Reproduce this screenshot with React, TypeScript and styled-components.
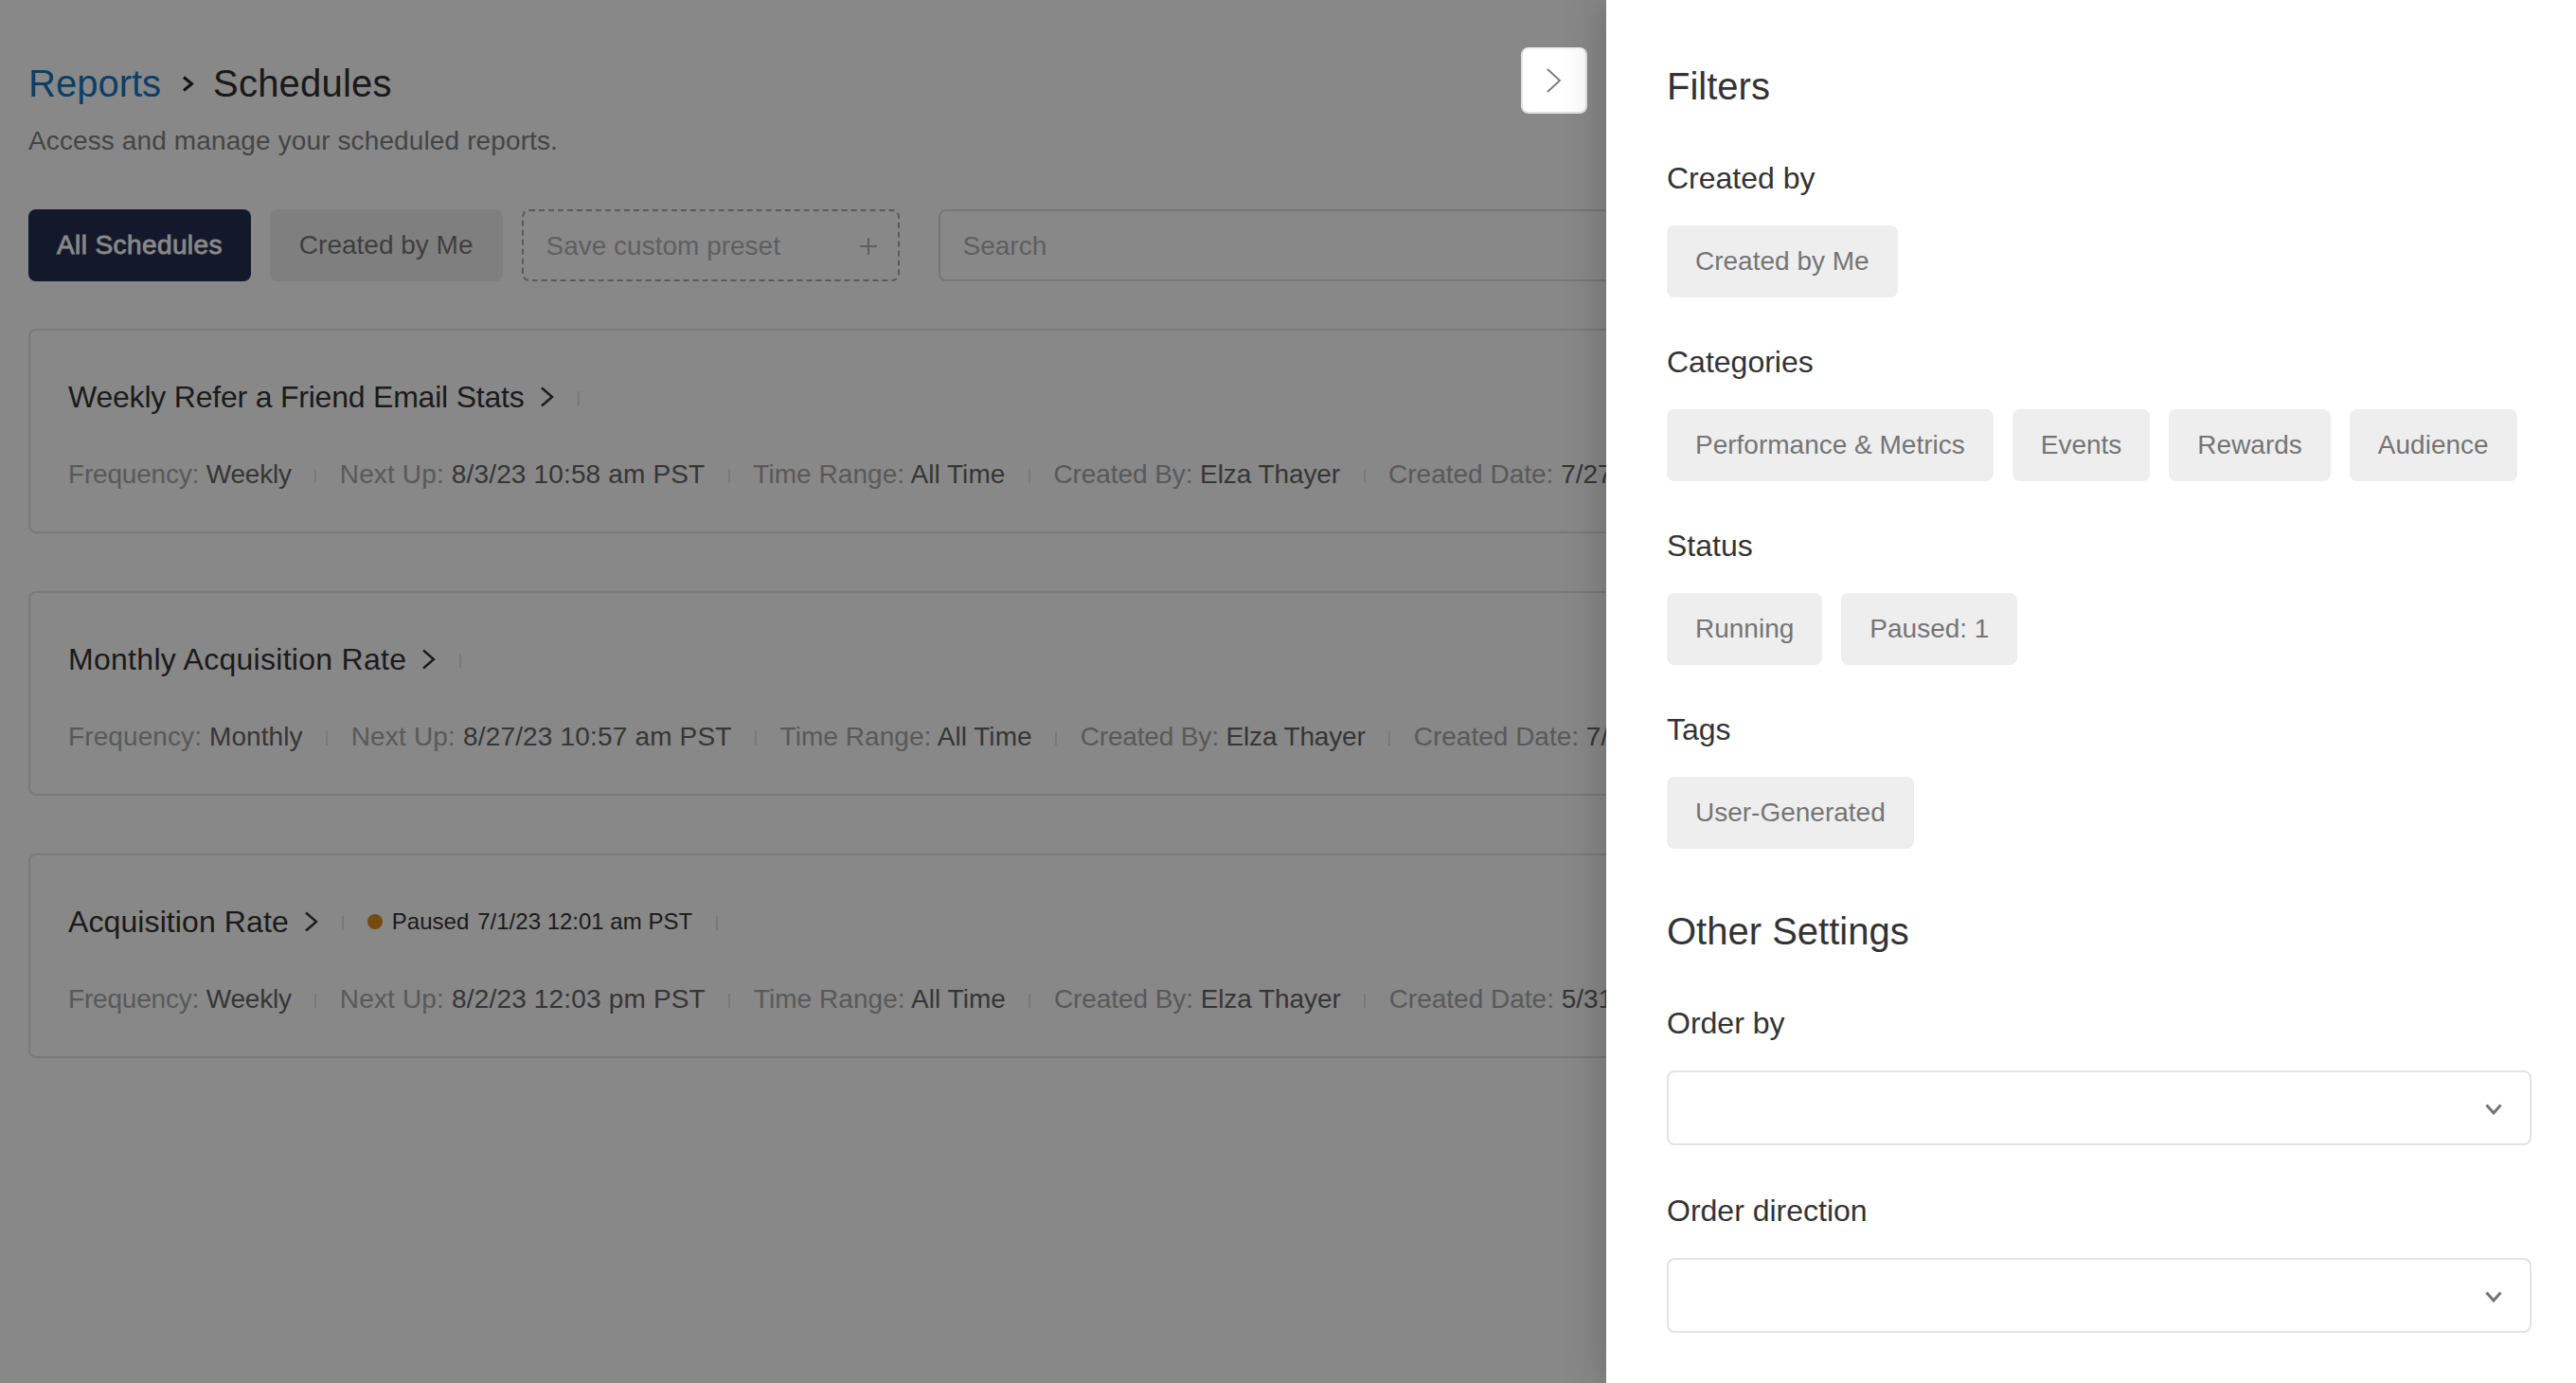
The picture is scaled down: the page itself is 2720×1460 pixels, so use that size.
import { Fragment } from "react";
import { createGlobalStyle, styled } from "styled-components";

const GlobalStyle = createGlobalStyle`
  * { box-sizing: border-box; }
  html, body { margin: 0; padding: 0; }
  body {
    background: #fff;
    font-family: "Liberation Sans", Arial, sans-serif;
    overflow: hidden;
  }
`;

const Page = styled.div`
  position: relative;
  width: 2720px;
  height: 1460px;
  overflow: hidden;
`;

const Main = styled.main`
  padding: 64px 0 0 30px;
`;

const Breadcrumb = styled.div`
  display: flex;
  align-items: center;
  height: 48px;
  font-size: 40px;
  color: #2f2f2f;
`;

const Crumb = styled.a`
  color: #1677c4;
  text-decoration: none;
`;

const CrumbArrow = styled.svg`
  width: 13px;
  height: 17px;
  margin: 0 20px 0 22px;
`;

const CurrentCrumb = styled.span`
  letter-spacing: 0.2px;
`;

const Subtitle = styled.p`
  margin: 20px 0 0;
  font-size: 28px;
  line-height: 34px;
  letter-spacing: 0.12px;
  color: #818181;
`;

const Toolbar = styled.div`
  display: flex;
  margin-top: 55px;
  gap: 20px;
`;

const PresetButton = styled.button<{ $active?: boolean }>`
  height: 76px;
  padding: 0 ${(p) => (p.$active ? "30px" : "31px")};
  border: 0;
  border-radius: 8px;
  font: inherit;
  font-size: 28px;
  background: ${(p) => (p.$active ? "#252f52" : "#eeeeee")};
  color: ${(p) => (p.$active ? "#ffffff" : "#767676")};
  letter-spacing: ${(p) => (p.$active ? "0.4px" : "0")};
  -webkit-text-stroke: ${(p) => (p.$active ? "0.8px #ffffff" : "0")};
`;

const SavePreset = styled.div`
  display: flex;
  align-items: center;
  justify-content: space-between;
  width: 399px;
  height: 76px;
  padding: 1px 22px 0 24px;
  border: 2px dashed #a9a9a9;
  border-radius: 8px;
  font-size: 28px;
  color: #b3b3b3;
`;

const PlusIcon = styled.svg`
  width: 18px;
  height: 18px;
`;

const SearchBox = styled.div`
  display: flex;
  align-items: center;
  flex: 1;
  height: 76px;
  margin-left: 21px;
  padding: 1px 24px 0;
  border: 2px solid #dddddd;
  border-radius: 8px;
  font-size: 28px;
  color: #b3b3b3;
`;

const CardList = styled.div`
  display: flex;
  flex-direction: column;
  gap: 61px;
  margin-top: 50px;
`;

const Card = styled.article`
  height: 216px;
  padding: 46px 40px 0;
  border: 2px solid #e3e3e3;
  border-radius: 8px;
  white-space: nowrap;
  overflow: hidden;
`;

const TitleRow = styled.div`
  display: flex;
  align-items: center;
  height: 48px;
`;

const CardTitle = styled.span<{ $tracking: number }>`
  font-size: 32px;
  letter-spacing: ${(p) => p.$tracking}px;
  color: #333333;
`;

const TitleChevron = styled.svg`
  width: 15px;
  height: 22px;
  margin-left: 16px;
`;

const Divider = styled.span`
  width: 2px;
  height: 15px;
  flex: none;
  background: #e3e3e3;
  margin: 2px 25px 0;
`;

const MetaDivider = styled(Divider)`
  margin: 2px 24.5px 0;
`;

const StatusDot = styled.span`
  width: 16px;
  height: 16px;
  border-radius: 50%;
  background: #dd8b1f;
  margin-right: 10px;
`;

const StatusText = styled.span`
  font-size: 24px;
  color: #333333;
`;

const StatusDate = styled(StatusText)`
  margin-left: 9px;
`;

const MetaRow = styled.div`
  display: flex;
  align-items: center;
  margin-top: 41px;
  height: 34px;
  font-size: 28px;
`;

const MetaItemText = styled.span<{ $tracking: number }>`
  letter-spacing: ${(p) => p.$tracking}px;
`;

const MetaLabel = styled.span`
  color: #a8a8a8;
`;

const MetaValue = styled.span`
  color: #656565;
`;

const Overlay = styled.div`
  position: absolute;
  inset: 0;
  background: rgba(0, 0, 0, 0.465);
`;

const CollapseButton = styled.button`
  position: absolute;
  top: 50px;
  left: 1606px;
  display: flex;
  align-items: center;
  justify-content: center;
  width: 70px;
  height: 70px;
  padding: 0;
  background: #fff;
  border: 2px solid #e3e3e3;
  border-top-color: #f2f2f2;
  border-radius: 8px;
`;

const CollapseIcon = styled.svg`
  width: 16px;
  height: 26px;
`;

const Drawer = styled.aside`
  position: absolute;
  top: 0;
  right: 0;
  bottom: 0;
  width: 1024px;
  padding: 67px 47px 0 64px;
  background: #fff;
  box-shadow: -6px 0 40px rgba(0, 0, 0, 0.18);
`;

const DrawerTitle = styled.h2`
  margin: 0;
  font-size: 40px;
  line-height: 48px;
  font-weight: 400;
  color: #333333;
`;

const FilterSection = styled.section`
  margin-top: 49px;

  &:first-of-type {
    margin-top: 54px;
  }
`;

const FieldLabel = styled.div`
  font-size: 32px;
  line-height: 38px;
  color: #333333;
`;

const ChipRow = styled.div`
  display: flex;
  gap: 20px;
  margin-top: 31px;
`;

const Chip = styled.span`
  display: flex;
  align-items: center;
  height: 76px;
  padding: 0 30px;
  border-radius: 8px;
  background: #eeeeee;
  font-size: 28px;
  color: #757575;
`;

const SettingsTitle = styled(DrawerTitle)`
  margin-top: 63px;
`;

const SelectField = styled.div<{ $first?: boolean }>`
  margin-top: ${(p) => (p.$first ? "54px" : "50px")};
`;

const SelectBox = styled.div`
  display: flex;
  align-items: center;
  justify-content: flex-end;
  height: 79px;
  margin-top: 31px;
  padding: 3px 29px 0 0;
  border: 2px solid #e3e3e3;
  border-radius: 8px;
`;

const SelectChevron = styled.svg`
  width: 18px;
  height: 12px;
`;

interface MetaItem {
  label: string;
  value: string;
  tracking: number;
}

interface Schedule {
  title: string;
  tracking: number;
  paused?: string;
  meta: MetaItem[];
}

const schedules: Schedule[] = [
  {
    title: "Weekly Refer a Friend Email Stats",
    tracking: -0.21,
    meta: [
      { label: "Frequency:", value: "Weekly", tracking: -0.2 },
      { label: "Next Up:", value: "8/3/23 10:58 am PST", tracking: 0.15 },
      { label: "Time Range:", value: "All Time", tracking: 0.05 },
      { label: "Created By:", value: "Elza Thayer", tracking: -0.08 },
      { label: "Created Date:", value: "7/27/23", tracking: 0 },
    ],
  },
  {
    title: "Monthly Acquisition Rate",
    tracking: 0.29,
    meta: [
      { label: "Frequency:", value: "Monthly", tracking: 0.1 },
      { label: "Next Up:", value: "8/27/23 10:57 am PST", tracking: 0.17 },
      { label: "Time Range:", value: "All Time", tracking: 0.05 },
      { label: "Created By:", value: "Elza Thayer", tracking: -0.15 },
      { label: "Created Date:", value: "7/27/23", tracking: 0 },
    ],
  },
  {
    title: "Acquisition Rate",
    tracking: 0.1,
    paused: "7/1/23 12:01 am PST",
    meta: [
      { label: "Frequency:", value: "Weekly", tracking: -0.2 },
      { label: "Next Up:", value: "8/2/23 12:03 pm PST", tracking: 0.17 },
      { label: "Time Range:", value: "All Time", tracking: 0.05 },
      { label: "Created By:", value: "Elza Thayer", tracking: -0.08 },
      { label: "Created Date:", value: "5/31/23", tracking: 0 },
    ],
  },
];

const filterGroups = [
  { label: "Created by", chips: ["Created by Me"] },
  { label: "Categories", chips: ["Performance & Metrics", "Events", "Rewards", "Audience"] },
  { label: "Status", chips: ["Running", "Paused: 1"] },
  { label: "Tags", chips: ["User-Generated"] },
];

function ScheduleCard({ schedule }: { schedule: Schedule }) {
  return (
    <Card>
      <TitleRow>
        <CardTitle $tracking={schedule.tracking}>{schedule.title}</CardTitle>
        <TitleChevron viewBox="0 0 15 22" fill="none" stroke="#333" strokeWidth="2.4">
          <path d="M2 1.5 L13 11 L2 20.5" />
        </TitleChevron>
        <Divider />
        {schedule.paused && (
          <>
            <StatusDot />
            <StatusText>Paused</StatusText>
            <StatusDate>{schedule.paused}</StatusDate>
            <Divider />
          </>
        )}
      </TitleRow>
      <MetaRow>
        {schedule.meta.map((item, i) => (
          <Fragment key={item.label}>
            {i > 0 && <MetaDivider />}
            <MetaItemText $tracking={item.tracking}>
              <MetaLabel>{item.label}</MetaLabel> <MetaValue>{item.value}</MetaValue>
            </MetaItemText>
          </Fragment>
        ))}
      </MetaRow>
    </Card>
  );
}

function SelectArrow() {
  return (
    <SelectChevron viewBox="0 0 18 12" fill="none" stroke="#757575" strokeWidth="3">
      <path d="M1.5 1.5 L9 10 L16.5 1.5" />
    </SelectChevron>
  );
}

export default function App() {
  return (
    <>
      <GlobalStyle />
      <Page>
        <Main>
          <Breadcrumb>
            <Crumb>Reports</Crumb>
            <CrumbArrow viewBox="0 0 13 17" fill="none" stroke="#222" strokeWidth="3">
              <path d="M2 1.5 L10.5 8.5 L2 15.5" />
            </CrumbArrow>
            <CurrentCrumb>Schedules</CurrentCrumb>
          </Breadcrumb>
          <Subtitle>Access and manage your scheduled reports.</Subtitle>
          <Toolbar>
            <PresetButton $active>All Schedules</PresetButton>
            <PresetButton>Created by Me</PresetButton>
            <SavePreset>
              Save custom preset
              <PlusIcon viewBox="0 0 18 18" stroke="#b3b3b3" strokeWidth="2">
                <path d="M9 0 V18 M0 9 H18" />
              </PlusIcon>
            </SavePreset>
            <SearchBox>Search</SearchBox>
          </Toolbar>
          <CardList>
            {schedules.map((s) => (
              <ScheduleCard key={s.title} schedule={s} />
            ))}
          </CardList>
        </Main>
        <Overlay />
        <CollapseButton>
          <CollapseIcon viewBox="0 0 16 26" fill="none" stroke="#777" strokeWidth="1.8">
            <path d="M1 1 L14 13 L1 25" />
          </CollapseIcon>
        </CollapseButton>
        <Drawer>
          <DrawerTitle>Filters</DrawerTitle>
          {filterGroups.map((group) => (
            <FilterSection key={group.label}>
              <FieldLabel>{group.label}</FieldLabel>
              <ChipRow>
                {group.chips.map((chip) => (
                  <Chip key={chip}>{chip}</Chip>
                ))}
              </ChipRow>
            </FilterSection>
          ))}
          <SettingsTitle>Other Settings</SettingsTitle>
          <SelectField $first>
            <FieldLabel>Order by</FieldLabel>
            <SelectBox>
              <SelectArrow />
            </SelectBox>
          </SelectField>
          <SelectField>
            <FieldLabel>Order direction</FieldLabel>
            <SelectBox>
              <SelectArrow />
            </SelectBox>
          </SelectField>
        </Drawer>
      </Page>
    </>
  );
}
